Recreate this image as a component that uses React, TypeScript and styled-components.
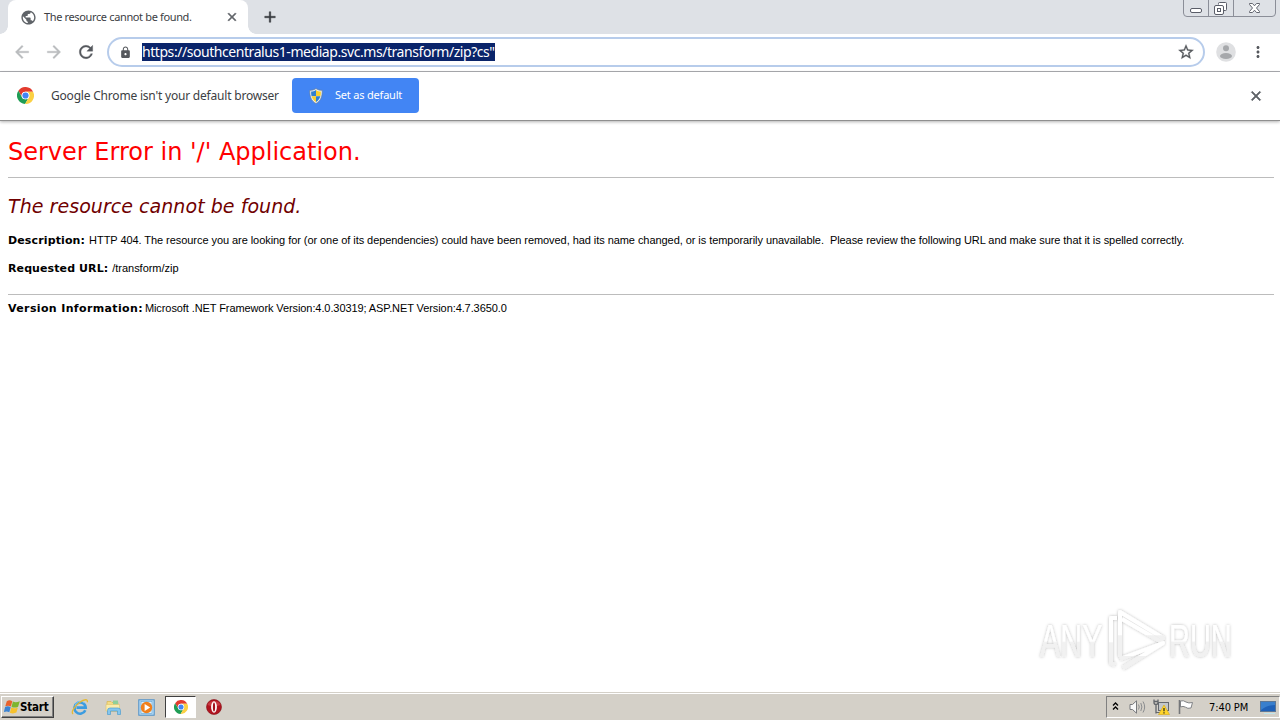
import styled, { createGlobalStyle } from "styled-components";
import { MdPublic, MdArrowBack, MdArrowForward, MdRefresh, MdLock, MdStarBorder, MdClose, MdAdd, MdMoreVert } from "react-icons/md";

const ChromeLogo = ({ size }: { size: number }) => {
  const blade = "M0 -5H9.8A11 11 0 0 0 -9.23 -5.99L-4.33 2.5A5 5 0 0 1 0 -5Z";
  return (
    <svg width={size} height={size} viewBox="-11 -11 22 22">
      <circle r="10.6" fill="#fff" />
      <path d={blade} fill="#e33b2e" />
      <path d={blade} fill="#1f9d55" transform="rotate(-120)" />
      <path d={blade} fill="#fbd043" transform="rotate(120)" />
      <circle r="5" fill="#fff" />
      <circle r="4" fill="#4285f4" />
    </svg>
  );
};

const Shield = () => (
  <svg width="14" height="16" viewBox="0 0 14 16">
    <path d="M7 .5C5 2 3 2.3.8 2.3.5 8 2 13 7 15.5 12 13 13.500 8 13.200 2.300 11 2.300 9 2 7 .5Z" fill="#e8eef5" stroke="#667c96" strokeWidth=".7" />
    <path d="M7 2C5.500 3 4 3.500 2.200 3.600 2 5.500 2.200 7 2.600 8.300H7Z" fill="#2f7fd0" />
    <path d="M7 2c1.500 1 3 1.500 4.800 1.600.2 1.900 0 3.400-.4 4.700H7Z" fill="#f9cf2f" />
    <path d="M2.600 8.300C3.300 10.800 4.800 12.800 7 14V8.300Z" fill="#f9cf2f" />
    <path d="M11.400 8.300C10.700 10.800 9.200 12.800 7 14V8.300Z" fill="#2f7fd0" />
  </svg>
);

const WindowControls = () => (
  <svg width="94" height="18" viewBox="0 0 94 18" fill="none">
    <path d="M.5 0V13Q.5 16.500 4 16.500H89Q92.500 16.500 92.500 13V0M25.500 0V16M50.500 0V16" stroke="#8b8e98" />
    <rect x="7.500" y="8.500" width="11" height="4" rx="1.500" fill="#fff" stroke="#5a5d68" />
    <path d="M35.500 4.500V3.500Q35.500 2.500 36.500 2.500H42.500Q43.500 2.500 43.500 3.500V9.500Q43.500 10.500 42.500 10.500H40.500" fill="#fff" stroke="#5a5d68" />
    <rect x="31.500" y="5.500" width="9" height="9" rx="1.500" fill="#fff" stroke="#5a5d68" />
    <rect x="34.500" y="8.500" width="3" height="3" stroke="#5a5d68" />
    <path d="M66.500 3.500H69.500L71.500 5.800 73.500 3.500H76.500V4.500L73.500 8 76.500 11.500V12.500H73.500L71.500 10.200 69.500 12.500H66.500V11.500L69.500 8 66.500 4.500Z" fill="#fff" stroke="#62656f" />
  </svg>
);

const Avatar = () => (
  <svg width="20" height="20" viewBox="0 0 20 20">
    <circle cx="10" cy="10" r="9.800" fill="#dfe0e2" />
    <circle cx="10" cy="6.200" r="3" fill="#a6a8ab" />
    <ellipse cx="10" cy="14" rx="6" ry="3" fill="#a6a8ab" />
  </svg>
);

const WindowsFlag = () => (
  <svg width="16" height="16" viewBox="0 0 16 16">
    <path d="M2.800 2.300Q5.500.3 8.300 2.200L6.900 7.500Q4.300 5.900 1.300 7.300Z" fill="#e8622c" />
    <path d="M8.900 2.600Q11.800 4.200 15.800 2.200L14.100 7.700Q10.800 9.300 7.500 7.900Z" fill="#7db52f" />
    <path d="M1.100 8Q4 6.600 6.700 8.200L5.300 13.300Q2.800 11.700-.2 13.200Z" fill="#3b83d2" />
    <path d="M7.300 8.600Q10.500 10 13.900 8.400L12.400 13.600Q9 15.200 5.900 13.700Z" fill="#f6c12d" />
  </svg>
);

const ExplorerE = () => (
  <svg width="18" height="18" viewBox="0 0 18 18" fill="none">
    <path d="M14.300 12.200A5.600 5.600 0 1 1 14.700 9.600H5.500" stroke="#3c9ce0" strokeWidth="2.600" />
    <path d="M13.500 4.800A5.600 5.600 0 0 0 4 8" stroke="#82cbf4" strokeWidth="1" />
    <path d="M2.200 15.900C-.5 15 3 8.500 8.500 4.500 13 1.200 17.500.5 16.200 4.300" stroke="#e5b935" strokeWidth="1.300" />
  </svg>
);

const Folder = () => (
  <svg width="17" height="17" viewBox="0 0 17 17">
    <path d="M2 2.500H6L7 3.500H13V12H2Z" fill="#f4dc86" stroke="#d9b64f" strokeWidth=".7" />
    <rect x="8" y="1.500" width="5" height="5" fill="#8fcf9a" />
    <path d="M1 5.500H14.500V12H1Z" fill="#faecad" stroke="#dfc469" strokeWidth=".6" />
    <path d="M2.500 15.500V11.500Q2.500 9 5 9H13Q15.500 9 15.500 11.500V15.500H12.500V12H5.500V15.500Z" fill="#85c6ee" stroke="#4f9ed0" strokeWidth=".7" />
  </svg>
);

const MediaPlayer = () => (
  <svg width="17" height="17" viewBox="0 0 17 17">
    <rect x=".8" y=".8" width="15.400" height="15.400" fill="#b8dcf5" stroke="#4b8ec7" />
    <rect x="3" y="2.500" width="11" height="12" fill="#d9effc" stroke="#5fa2d4" strokeWidth=".6" />
    <circle cx="8.500" cy="8.500" r="5.700" fill="#f0801d" />
    <path d="M6.600 5V12L12.200 8.500Z" fill="#fff" />
  </svg>
);

const OperaLogo = () => (
  <svg width="16" height="16" viewBox="0 0 16 16">
    <circle cx="8" cy="8" r="7.500" fill="#b01420" stroke="#841018" strokeWidth=".6" />
    <path d="M1.500 6A7 6.500 0 0 1 14.500 6Q8 8.500 1.500 6Z" fill="#c93a42" />
    <ellipse cx="8" cy="8" rx="2.900" ry="5.800" fill="#fff" />
    <ellipse cx="8" cy="8" rx="1.100" ry="4.600" fill="#a3111c" />
  </svg>
);

const Chevrons = () => (
  <svg width="7" height="10" viewBox="0 0 7 10" fill="none" stroke="#000" strokeWidth="1.300">
    <path d="M1 3.500 3.500 1 6 3.500M1 7.500 3.500 5 6 7.500" />
  </svg>
);

const Speaker = () => (
  <svg width="17" height="16" viewBox="0 0 17 16" fill="none">
    <path d="M1 5.500H3.500L7.500 1.800V14.200L3.500 10.500H1Z" fill="#f8f8f8" stroke="#77797c" />
    <path d="M9.500 5.500Q11 8 9.500 10.500M11.800 4Q14 8 11.800 12M14 2.500Q17.300 8 14 13.500" stroke="#8a8c8f" />
  </svg>
);

const Network = () => (
  <svg width="17" height="17" viewBox="0 0 17 17">
    <rect x="5.500" y="3.500" width="10" height="8" fill="#c3c7ca" stroke="#64686e" />
    <path d="M3 13.500H8" stroke="#64686e" />
    <path d="M1 .5V3.500Q1 5.500 3 5.500V14.500M5 .5V3.500Q5 5.500 3 5.500M1 2.500H5" fill="none" stroke="#62666b" strokeWidth="1.300" />
    <path d="M11 6 16.500 15.500H5.500Z" fill="#ffd52a" stroke="#d7a711" strokeWidth=".6" />
    <path d="M10.400 9H11.600V12.300H10.400ZM10.400 13.200H11.600V14.400H10.400Z" fill="#222" />
  </svg>
);

const ActionFlag = () => (
  <svg width="17" height="16" viewBox="0 0 17 16">
    <path d="M2.500 1V15" stroke="#75777a" strokeWidth="1.600" />
    <path d="M3.500 2Q6.500 1 9 3 11.500 4.600 15.500 3.500L14 9Q10.500 10 8.500 8.200 6 6.600 3.500 8Z" fill="#fff" stroke="#818386" />
  </svg>
);

const Desktop = () => (
  <svg width="16" height="15" viewBox="0 0 16 15">
    <rect x=".5" y="1.500" width="15" height="10" fill="#1f61b8" stroke="#5d7795" />
    <path d="M1 2H15V5Q7 5 1 10Z" fill="#397fcd" />
    <path d="M4 13.500H15" stroke="#bfe6ed" />
  </svg>
);

const Watermark = () => (
  <svg width="204" height="66" viewBox="0 0 204 66">
    <defs>
      <filter id="soft" x="-10%" y="-10%" width="120%" height="120%">
        <feDropShadow dx="0" dy="0" stdDeviation="1.500" floodColor="#000" floodOpacity=".28" />
      </filter>
      <linearGradient id="fade" x1="0" y1="0" x2="0" y2="1">
        <stop offset=".5" stopColor="#fff" />
        <stop offset=".53" stopColor="#f1f1f1" />
      </linearGradient>
    </defs>
    <g filter="url(#soft)">
      <WatermarkText transform="translate(4 50) scale(.66 1)">ANY</WatermarkText>
      <WatermarkText transform="translate(133 50) scale(.63 1)">RUN</WatermarkText>
      <g fill="none" stroke="url(#fade)" strokeWidth="4" strokeLinejoin="round">
        <path d="M81 11H75V56L79 58" />
        <path d="M84 50V5L127 31 124 34 86 12" />
        <path d="M84 52 127 36 87 61" />
      </g>
    </g>
  </svg>
);

export default function App() {
  return (
    <Screen>
      <GlobalStyle />
      <TabStrip>
        <Tab>
          <MdPublic size={17} />
          <TabTitle>The resource cannot be found.</TabTitle>
          <BoldClose size={14} />
        </Tab>
        <NewTab>
          <MdAdd size={18} />
        </NewTab>
        <WindowControls />
      </TabStrip>
      <Toolbar>
        <NavButton $muted>
          <MdArrowBack size={20} />
        </NavButton>
        <NavButton $muted>
          <MdArrowForward size={20} />
        </NavButton>
        <NavButton>
          <MdRefresh size={20} />
        </NavButton>
        <Omnibox>
          <MdLock size={13} />
          <Url>https://southcentralus1-mediap.svc.ms/transform/zip?cs"</Url>
          <MdStarBorder size={18} />
        </Omnibox>
        <Avatar />
        <MdMoreVert size={18} />
      </Toolbar>
      <InfoBar>
        <ChromeLogo size={17} />
        <InfoText>Google Chrome isn't your default browser</InfoText>
        <DefaultButton>
          <Shield />
          <span>Set as default</span>
        </DefaultButton>
        <BoldClose size={16} />
      </InfoBar>
      <Page>
        <ErrorTitle>Server Error in '/' Application.</ErrorTitle>
        <Rule />
        <ErrorName>The resource cannot be found.</ErrorName>
        <Detail $gap={4}>
          <Label $spacing={0.13}>Description:</Label>
          <DetailText $spacing={-0.06}>
            {"HTTP 404. The resource you are looking for (or one of its dependencies) could have been removed, had its name changed, or is temporarily unavailable.  Please review the following URL and make sure that it is spelled correctly."}
          </DetailText>
        </Detail>
        <Detail $gap={4}>
          <Label $spacing={0.1}>Requested URL:</Label>
          <DetailText $spacing={-0.03}>/transform/zip</DetailText>
        </Detail>
        <VersionBlock>
          <Rule />
          <Detail $gap={2}>
            <Label $spacing={0.36}>Version Information:</Label>
            <DetailText $spacing={-0.09}>Microsoft .NET Framework Version:4.0.30319; ASP.NET Version:4.7.3650.0</DetailText>
          </Detail>
        </VersionBlock>
        <WatermarkSlot>
          <Watermark />
        </WatermarkSlot>
      </Page>
      <Taskbar>
        <StartButton>
          <WindowsFlag />
          <span>Start</span>
        </StartButton>
        <TaskItem><ExplorerE /></TaskItem>
        <TaskItem><Folder /></TaskItem>
        <TaskItem><MediaPlayer /></TaskItem>
        <TaskItem $active><ChromeLogo size={14} /></TaskItem>
        <TaskItem><OperaLogo /></TaskItem>
        <Tray>
          <Chevrons />
          <Speaker />
          <Network />
          <ActionFlag />
          <Clock>7:40 PM</Clock>
          <Desktop />
        </Tray>
      </Taskbar>
    </Screen>
  );
}

const GlobalStyle = createGlobalStyle`
  * {
    box-sizing: border-box;
  }
  body {
    margin: 0;
    overflow: hidden;
  }
  svg {
    flex: none;
    display: block;
  }
`;

const Screen = styled.div`
  display: flex;
  flex-direction: column;
  width: 1280px;
  height: 720px;
  background: #fff;
  color: #3c4043;
  font-family: "DejaVu Sans Condensed", "DejaVu Sans", sans-serif;
  white-space: nowrap;
`;

const BoldClose = styled(MdClose)`
  color: #5f6368;
  path:last-child {
    stroke: #5f6368;
    stroke-width: 1;
  }
`;

const TabStrip = styled.div`
  display: flex;
  height: 34px;
  padding-left: 8px;
  background: #dee1e6;
  > svg {
    margin-left: auto;
    margin-right: 3px;
  }
`;

const Tab = styled.div`
  position: relative;
  display: flex;
  align-items: center;
  width: 240px;
  padding: 0 9px 0 12px;
  border-radius: 8px 8px 0 0;
  background: #fff;
  color: #5f6368;
  /* flared feet where the tab meets the toolbar */
  &::before,
  &::after {
    content: "";
    position: absolute;
    bottom: 0;
    width: 8px;
    height: 8px;
  }
  &::before {
    left: -8px;
    background: radial-gradient(circle at 0 0, #dee1e6 7.5px, #fff 8px);
  }
  &::after {
    right: -8px;
    background: radial-gradient(circle at 100% 0, #dee1e6 7.5px, #fff 8px);
  }
`;

const TabTitle = styled.span`
  flex: 1;
  margin-left: 7px;
  padding-bottom: 2px;
  color: #3c4043;
  font-family: "Noto Sans", sans-serif;
  font-size: 11px;
  letter-spacing: -0.36px;
`;

const NewTab = styled.div`
  display: flex;
  align-items: center;
  margin-left: 13px;
  color: #35383c;
  path:last-child {
    stroke: #35383c;
    stroke-width: 0.6;
  }
`;

const Toolbar = styled.div`
  display: flex;
  align-items: center;
  height: 38px;
  padding: 0 13px 1px 12px;
  border-bottom: 1px solid #adaeb3;
  color: #55585d;
  > svg:last-child {
    margin-left: 13px;
  }
`;

const NavButton = styled.div<{ $muted?: boolean }>`
  width: 32px;
  color: ${(props) => (props.$muted ? "#babcbe" : "#55585d")};
  path:last-child {
    stroke: currentColor;
    stroke-width: 0.4;
  }
`;

const Omnibox = styled.div`
  display: flex;
  flex: 1;
  align-items: center;
  height: 30px;
  margin: 0 11px 0 -1px;
  padding: 0 8px 0 10px;
  border: 2px solid #b7cceb;
  border-radius: 15px;
  > svg:last-child {
    margin-left: auto;
  }
  > svg:last-child path:last-child {
    stroke: currentColor;
    stroke-width: 0.4;
  }
`;

const Url = styled.span`
  height: 18px;
  margin-left: 10px;
  background: #0a246a;
  color: #fff;
  font-family: "Noto Sans", sans-serif;
  font-size: 14px;
  line-height: 18px;
  letter-spacing: -0.44px;
`;

const InfoBar = styled.div`
  position: relative;
  display: flex;
  align-items: center;
  height: 49px;
  padding: 0 16px 1px 17px;
  border-bottom: 1px solid #8f8f8f;
  box-shadow: 0 1px 3px rgba(0, 0, 0, 0.3);
  background: #fff;
  > svg:last-child {
    margin-left: auto;
  }
`;

const InfoText = styled.span`
  width: 241px;
  margin-left: 17px;
  font-family: "Noto Sans", sans-serif;
  font-size: 12px;
  letter-spacing: -0.2px;
`;

const DefaultButton = styled.div`
  display: flex;
  align-items: center;
  gap: 12px;
  width: 127px;
  height: 35px;
  padding-left: 17px;
  border-radius: 4px;
  background: #4285f4;
  color: #fff;
  font-family: "Noto Sans", sans-serif;
  font-size: 11px;
  letter-spacing: -0.2px;
  span {
    padding-bottom: 2px;
  }
`;

const Page = styled.main`
  flex: 1;
  display: flex;
  flex-direction: column;
  padding: 11px 6px 0 8px;
  color: #000;
`;

const ErrorTitle = styled.h1`
  height: 45px;
  margin: 0;
  color: #f00;
  font-family: "DejaVu Sans", sans-serif;
  font-size: 24px;
  font-weight: 400;
  line-height: 40px;
`;

const Rule = styled.div`
  height: 1px;
  background: #bcbcbc;
`;

const ErrorName = styled.h2`
  height: 48px;
  margin: 0;
  padding-top: 8px;
  color: #700000;
  font-family: "DejaVu Sans", sans-serif;
  font-size: 19px;
  font-style: italic;
  font-weight: 400;
  line-height: 41px;
  letter-spacing: 0.05px;
`;

const Label = styled.b<{ $spacing: number }>`
  font-family: "DejaVu Sans", sans-serif;
  font-size: 11px;
  letter-spacing: ${(props) => props.$spacing}px;
`;

const Detail = styled.div<{ $gap: number }>`
  display: flex;
  gap: ${(props) => props.$gap}px;
  height: 28px;
  line-height: 28px;
  ${Label} {
    padding-top: 1px;
  }
`;

const DetailText = styled.span<{ $spacing: number }>`
  font-family: "Liberation Sans", sans-serif;
  font-size: 11px;
  letter-spacing: ${(props) => props.$spacing}px;
  white-space: pre;
`;

const VersionBlock = styled.div`
  padding-top: 12px;
  ${Detail} {
    line-height: 27px;
  }
  ${Label} {
    padding-top: 0;
  }
`;

const WatermarkSlot = styled.div`
  align-self: flex-end;
  margin: auto 34px 19px 0;
`;

const WatermarkText = styled.text`
  fill: url(#fade);
  font-family: "Liberation Sans", sans-serif;
  font-size: 46px;
`;

const Taskbar = styled.footer`
  display: flex;
  align-items: center;
  height: 28px;
  padding: 1px 0 0 1px;
  border-top: 1px solid #d4d0c8;
  box-shadow: inset 0 1px #fff;
  background: #d4d0c8;
`;

const StartButton = styled.div`
  display: flex;
  align-items: center;
  width: 53px;
  height: 22px;
  margin-right: 10px;
  padding-left: 2px;
  border: 1px solid;
  border-color: #fff #404040 #404040 #fff;
  box-shadow: inset -1px -1px #808080;
  color: #000;
  font-size: 11.5px;
  font-weight: 700;
  letter-spacing: -0.2px;
`;

const TaskItem = styled.div<{ $active?: boolean }>`
  display: flex;
  align-items: center;
  justify-content: center;
  width: 31px;
  height: 22px;
  margin-right: 2.7px;
  border: 1px solid;
  border-color: ${(props) => (props.$active ? "#404040 #fff #fff #404040" : "transparent")};
  background: ${(props) => (props.$active ? "#fff" : "none")};
`;

const Tray = styled.div`
  display: flex;
  align-items: center;
  gap: 7px;
  width: 174px;
  height: 22px;
  margin-left: auto;
  padding-left: 5px;
  border: 1px solid;
  border-color: #808080 #fff #fff #808080;
  svg:first-child {
    margin-right: 3px;
  }
`;

const Clock = styled.span`
  width: 44px;
  margin-left: 8px;
  color: #000;
  font-size: 11px;
  letter-spacing: -0.1px;
`;
